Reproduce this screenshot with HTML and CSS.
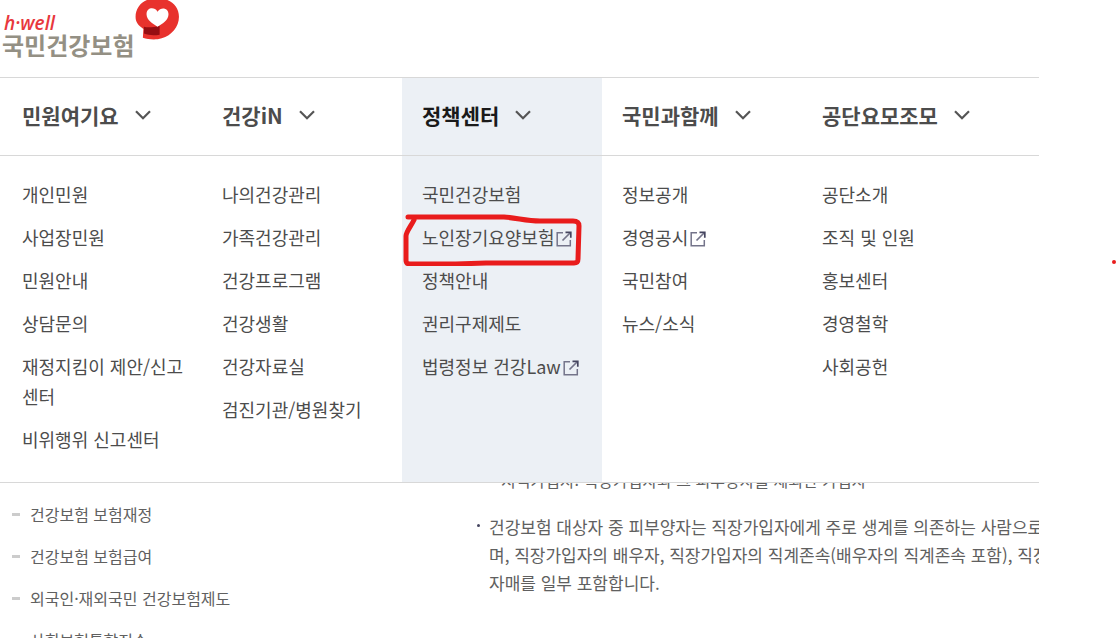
FILE: index.html
```html
<!DOCTYPE html>
<html lang="ko">
<head>
    <meta charset="UTF-8">
    <meta name="viewport" content="width=device-width, initial-scale=1.0">
    <title>국민건강보험</title>
    <link rel="stylesheet" href="styles.css">
</head>
<body>

<!-- 공통 아이콘 -->
<svg class="sprite" aria-hidden="true">
    <symbol id="arrow" viewBox="0 0 16 10">
        <path d="M1 1.2l7 7 7-7" fill="none" stroke="#555" stroke-width="2.200"/>
    </symbol>
    <symbol id="blank" viewBox="0 0 16 16">
        <path d="M7 1.7H1.2v13.1h13.1V9" fill="none" stroke="#74748a" stroke-width="1.5"/>
        <path d="M6.5 9.5L14 2" fill="none" stroke="#74748a" stroke-width="1.7"/>
        <path d="M9.5 1.3h5.3v5.4" fill="none" stroke="#45455f" stroke-width="1.7"/>
    </symbol>
</svg>

<div class="page">
    <header class="header">
        <a href="#" class="logo">
            <span class="logo-text">
                <em>h·well</em>
                <strong>국민건강보험</strong>
            </span>
            <svg class="logo-mark" viewBox="0 0 44 42" aria-hidden="true">
                <path d="M22 0C10 0 1.500 7.500 1.500 18c0 5 2.500 8.500 7.500 11.500L8.500 38c5 1.500 12 2.500 18 .5C36 36 43 27.500 43 18 43 7 34 0 22 0z" fill="#e8322d"/>
                <path d="M9.500 27.500c4 1 9 .5 15-1V35c-5 .8-10 .8-15-1z" fill="#950d12"/>
                <path d="M22.500 27.500C18 24.500 12 21 12 15.500 12 9 19.500 8 22.500 13 26 8 33 9.500 33 15.500c0 5.500-5.500 9-10.500 12z" fill="#fff"/>
            </svg>
        </a>
    </header>

    <nav>
        <div class="gnb">
            <button type="button">민원여기요<svg class="arrow"><use href="#arrow"/></svg></button>
            <button type="button">건강iN<svg class="arrow"><use href="#arrow"/></svg></button>
            <button type="button" class="on">정책센터<svg class="arrow"><use href="#arrow"/></svg></button>
            <button type="button">국민과함께<svg class="arrow"><use href="#arrow"/></svg></button>
            <button type="button">공단요모조모<svg class="arrow"><use href="#arrow"/></svg></button>
        </div>

        <div class="sub-menu">
            <ul>
                <li><a href="#">개인민원</a></li>
                <li><a href="#">사업장민원</a></li>
                <li><a href="#">민원안내</a></li>
                <li><a href="#">상담문의</a></li>
                <li><a href="#">재정지킴이 제안/신고센터</a></li>
                <li><a href="#">비위행위 신고센터</a></li>
            </ul>
            <ul>
                <li><a href="#">나의건강관리</a></li>
                <li><a href="#">가족건강관리</a></li>
                <li><a href="#">건강프로그램</a></li>
                <li><a href="#">건강생활</a></li>
                <li><a href="#">건강자료실</a></li>
                <li><a href="#">검진기관/병원찾기</a></li>
            </ul>
            <ul class="on">
                <li><a href="#">국민건강보험</a></li>
                <li class="marked">
                    <a href="#">노인장기요양보험<svg class="blank"><use href="#blank"/></svg></a>
                    <svg class="marker" viewBox="0 0 180 54" aria-hidden="true">
                        <path d="M5 5h96c14 1 22 4 36 4h33c5 0 6 2 6 5l-1 33c0 3-1 4-4 4H83L53 52H7c-3 0-4-1-4-4V24c0-4 5-10 8-16" fill="none" stroke="#e91c1c" stroke-width="5" stroke-linecap="round" stroke-linejoin="round"/>
                    </svg>
                </li>
                <li><a href="#">정책안내</a></li>
                <li><a href="#">권리구제제도</a></li>
                <li><a href="#">법령정보 건강Law<svg class="blank"><use href="#blank"/></svg></a></li>
            </ul>
            <ul>
                <li><a href="#">정보공개</a></li>
                <li><a href="#">경영공시<svg class="blank"><use href="#blank"/></svg></a></li>
                <li><a href="#">국민참여</a></li>
                <li><a href="#">뉴스/소식</a></li>
            </ul>
            <ul>
                <li><a href="#">공단소개</a></li>
                <li><a href="#">조직 및 인원</a></li>
                <li><a href="#">홍보센터</a></li>
                <li><a href="#">경영철학</a></li>
                <li><a href="#">사회공헌</a></li>
            </ul>
        </div>
    </nav>

    <div class="container">
        <ul class="lnb">
            <li><a href="#">건강보험 보험재정</a></li>
            <li><a href="#">건강보험 보험급여</a></li>
            <li><a href="#">외국인·재외국민 건강보험제도</a></li>
            <li><a href="#">사회보험통합징수</a></li>
        </ul>
        <main class="content">
            <p class="before">지역가입자: 직장가입자와 그 피부양자를 제외한 가입자</p>
            <p class="dot">건강보험 대상자 중 피부양자는 직장가입자에게 주로 생계를 의존하는 사람으로<br>
                며, 직장가입자의 배우자, 직장가입자의 직계존속(배우자의 직계존속 포함), 직장<br>
                자매를 일부 포함합니다.</p>
        </main>
    </div>
</div>

<span class="red-dot"></span>

</body>
</html>
```
FILE: styles.css
```css
*{
    margin: 0;
    padding: 0;
    box-sizing: border-box;
}

body{
    position: relative;
    height: 100vh;
    overflow: hidden;
    background-color: #fff;
    color: #4c4c4c;
    font-family: "Noto Sans CJK KR", sans-serif;
    font-size: 18px;
}

ul{
    list-style: none;
}

a{
    color: inherit;
    text-decoration: none;
}

.sprite{
    display: none;
}

.page{
    display: flex;
    flex-direction: column;
    width: 93%;
    height: 100%;
}

/* 로고 */
.header{
    height: 78px;
    border-bottom: 1px solid #d8d8d8;
}

.logo{
    display: inline-flex;
    align-items: flex-start;
    padding-left: 2px;
}

.logo-text{
    display: flex;
    flex-direction: column;
    padding-top: 13px;
}

.logo-text em{
    padding-left: 2px;
    color: #e8383d;
    font-family: "Open Sans", sans-serif;
    font-size: 19px;
    font-weight: 600;
    line-height: 20px;
}

.logo-text strong{
    color: #949084;
    font-size: 24px;
    font-weight: 700;
    line-height: 24px;
}

.logo-mark{
    width: 46px;
    height: 44px;
    margin-top: -2px;
}

/* 메뉴 */
.gnb,
.sub-menu{
    display: grid;
    grid-template-columns: repeat(5, minmax(0, 200px));
    padding-left: 2px;
    border-bottom: 1px solid #d8d8d8;
}

.gnb button{
    display: flex;
    align-items: center;
    gap: 16px;
    height: 77px;
    padding: 0 0 3px 20px;
    border: 0;
    background: none;
    color: #4c4c4c;
    font-family: inherit;
    font-size: 21px;
    font-weight: 700;
    cursor: pointer;
}

.gnb button.on{
    background-color: #ecf0f5;
    color: #1a1a1a;
}

.arrow{
    width: 16px;
    height: 10px;
}

.sub-menu ul{
    display: flex;
    flex-direction: column;
    gap: 13px;
    padding: 23px 12px 28px 20px;
}

.sub-menu ul.on{
    background-color: #ecf0f5;
}

.sub-menu li{
    line-height: 30px;
}

.blank{
    width: 16px;
    height: 16px;
    margin-left: 2px;
    vertical-align: -2px;
}

.marked{
    position: relative;
    white-space: nowrap;
}

.marker{
    position: absolute;
    top: -10px;
    left: -19px;
    width: 180px;
    height: 54px;
    pointer-events: none;
}

/* 본문 */
.container{
    display: grid;
    grid-template-columns: 475px minmax(0, 1fr);
    flex: 1;
    min-height: 0;
    overflow: hidden;
    color: #606060;
}

.lnb{
    display: flex;
    flex-direction: column;
    gap: 12px;
    padding: 16px 0 0 12px;
    font-size: 16px;
}

.lnb li{
    display: flex;
    align-items: center;
    gap: 10px;
    line-height: 30px;
}

.lnb li::before{
    content: "";
    width: 8px;
    height: 3px;
    background-color: #ccc;
}

.content{
    margin-top: -17px;
    font-size: 17px;
    line-height: 28px;
    white-space: nowrap;
}

.before{
    padding-left: 26px;
    font-size: 16px;
}

.dot{
    position: relative;
    margin-top: 19px;
    padding-left: 14px;
}

.dot::before{
    content: "";
    position: absolute;
    top: 11px;
    left: 2px;
    width: 3px;
    height: 3px;
    border-radius: 50%;
    background-color: #45455f;
}

.red-dot{
    position: absolute;
    top: 260px;
    right: 1px;
    width: 4px;
    height: 4px;
    border-radius: 50%;
    background-color: #e91c1c;
}
```
